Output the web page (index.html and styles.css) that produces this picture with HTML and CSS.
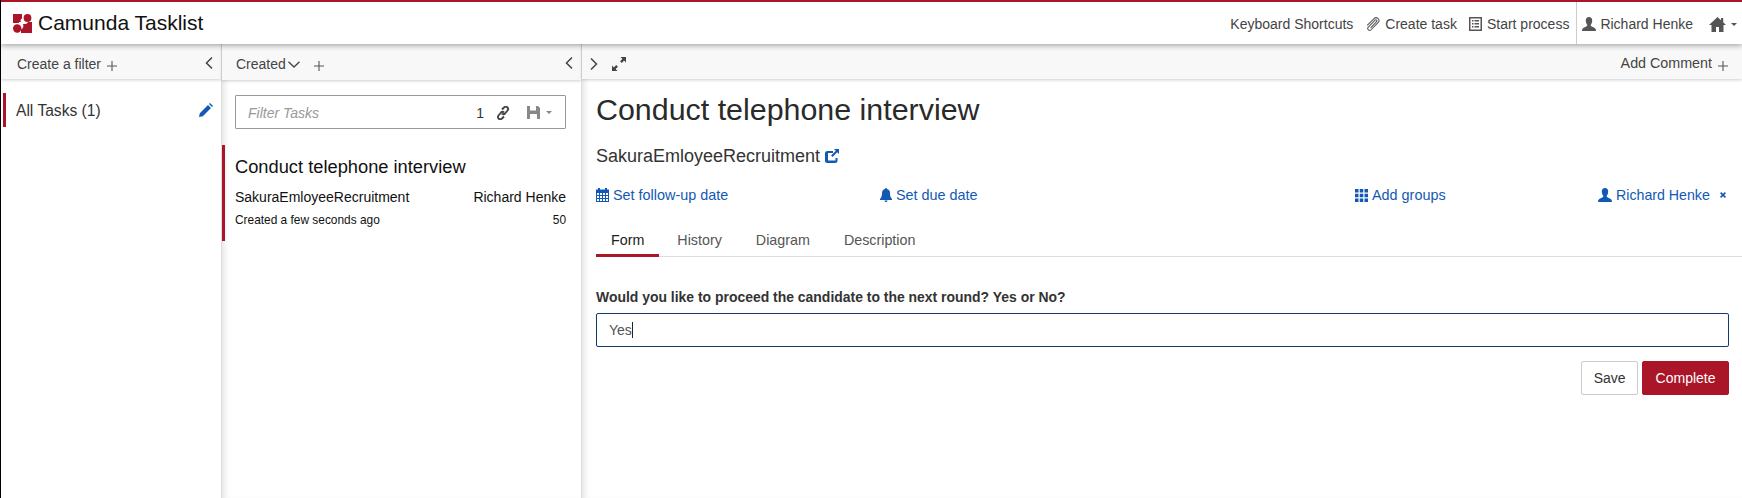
FILE: index.html
```html
<!DOCTYPE html>
<html lang="en">
<head>
  <meta charset="UTF-8" />
  <title>Camunda Tasklist</title>
  <link rel="stylesheet" href="styles.css">
</head>
<body>
  <header class="navbar">
    <div class="brand">
      <svg class="logo" viewBox="0 0 19 19" width="19" height="19">
        <path fill="#ab1528" d="M0 0h9v4.500a2.500 2.500 0 0 0-1 3.500H7a2 2 0 0 0-1.500 1H0zM10 10h2a3 3 0 0 0 3-2h4v11H8v-3.500a4.500 4.500 0 0 0 2-5.500z"/>
        <circle fill="#ab1528" cx="14.500" cy="4" r="3.900"/>
        <circle fill="#ab1528" cx="4.200" cy="14.500" r="4.200"/>
      </svg>
      <span class="brand-name">Camunda Tasklist</span>
    </div>
    <nav class="nav-links">
      <a class="nav-link">Keyboard Shortcuts</a>
      <a class="nav-link">
        <svg class="icon" viewBox="0 0 16 16" width="16" height="15"><path fill="none" stroke="#555" stroke-width="1.100" d="M5.500 11.500 11.800 5a1.100 1.100 0 0 0-1.600-1.600L3 10.800a2 2 0 0 0 2.900 2.800l7.500-7.600a3 3 0 0 0-4.300-4.300L1.800 9"/></svg>
        Create task
      </a>
      <a class="nav-link nav-link-last">
        <svg class="icon" viewBox="0 0 14 14" width="14" height="14"><path fill="#555" fill-rule="evenodd" d="M0 0h13v14H0zM1.500 1.500v11h10v-11zM3 3h1.500v1.500H3zM5.500 3H10v1.500H5.500zM3 6h1.500v1.500H3zM5.500 6H10v1.500H5.500zM3 9h1.500v1.500H3zM5.500 9H10v1.500H5.500z"/></svg>
        Start process
      </a>
      <a class="nav-link nav-user">
        <svg class="icon" viewBox="0 0 14 14" width="14" height="14"><path fill="#555" d="M7 0c2 0 3.200 1.500 3.200 3.500S9.300 7 8.700 8c0 1 .5 1.300 2 2 1.800.7 3.300 1.200 3.300 4H0c0-2.800 1.500-3.300 3.300-4 1.500-.7 2-1 2-2-.6-1-1.500-2.500-1.500-4.500S5 0 7 0z"/></svg>
        Richard Henke
      </a>
      <a class="nav-link nav-home">
        <svg class="icon" viewBox="0 0 17 15" width="17" height="15"><path fill="#555" d="M8.500 0 12 3.200V1h2.200v4.200L17 8h-2.500v7H10v-5H7v5H2.500V8H0z"/></svg>
        <span class="caret"></span>
      </a>
    </nav>
  </header>

  <main class="columns">
    <aside class="col col-filters">
      <div class="col-bar">
        <span class="bar-text">Create a filter</span>
        <svg class="plus" viewBox="0 0 10 10" width="10" height="10"><path stroke="#555" stroke-width="1.100" d="M5 0v10M0 5h10"/></svg>
        <svg class="chevron chevron-end" viewBox="0 0 8 12" width="8" height="12"><path fill="none" stroke="#444" stroke-width="1.500" d="M7 .5 1.500 6 7 11.500"/></svg>
      </div>
      <div class="filter-row">
        <span>All Tasks (1)</span>
        <svg class="pencil" viewBox="0 0 14 14" width="14" height="14"><path fill="#1259b5" d="M0 14l.8-3.800L9 2l3 3-8.200 8.200zM10 1l1-1 3 3-1 1z"/></svg>
      </div>
    </aside>

    <section class="col col-list">
      <div class="col-bar col-bar-tall">
        <span class="bar-text">Created</span>
        <svg class="sort-chevron" viewBox="0 0 12 7" width="12" height="7"><path fill="none" stroke="#444" stroke-width="1.300" d="M.5.700 6 6l5.500-5.300"/></svg>
        <svg class="plus plus-list" viewBox="0 0 10 10" width="10" height="10"><path stroke="#555" stroke-width="1.100" d="M5 0v10M0 5h10"/></svg>
        <svg class="chevron chevron-end" viewBox="0 0 8 12" width="8" height="12"><path fill="none" stroke="#444" stroke-width="1.500" d="M7 .5 1.500 6 7 11.500"/></svg>
      </div>
      <div class="search-box">
        <span class="search-placeholder">Filter Tasks</span>
        <span class="search-count">1</span>
        <svg class="search-link" viewBox="0 0 14 14" width="14" height="14"><path fill="none" stroke="#444" stroke-width="1.900" d="M6 3.500 8 1.500a2.300 2.300 0 0 1 3.500 3L9 7.500a2 2 0 0 1-3 0M8 10.500 6 12.500a2.300 2.300 0 0 1-3.500-3L5 6.500a2 2 0 0 1 3 0"/></svg>
        <svg class="search-save" viewBox="0 0 13 13" width="13" height="13"><path fill="#888" fill-rule="evenodd" d="M0 0h11l2 2v11H0zM3 0v4.500h6V0zM3 8v5h7V8z"/></svg>
        <span class="caret caret-light"></span>
      </div>
      <article class="task-card">
        <h3 class="task-title">Conduct telephone interview</h3>
        <div class="task-row">
          <span>SakuraEmloyeeRecruitment</span>
          <span>Richard Henke</span>
        </div>
        <div class="task-row task-row-small">
          <span>Created a few seconds ago</span>
          <span>50</span>
        </div>
      </article>
    </section>

    <section class="col col-detail">
      <div class="col-bar">
        <svg class="chevron" viewBox="0 0 8 12" width="8" height="12"><path fill="none" stroke="#444" stroke-width="1.500" d="M1 .5 6.500 6 1 11.500"/></svg>
        <svg class="expand" viewBox="0 0 14 14" width="14" height="14"><path fill="#444" d="M8.500 0H14v5.500l-1.900-1.900L9.800 5.900 8.100 4.200l2.300-2.300zM5.500 14H0V8.500l1.900 1.900 2.300-2.300 1.700 1.700-2.300 2.300z"/></svg>
        <span class="bar-text bar-comment">Add Comment</span>
        <svg class="plus" viewBox="0 0 10 10" width="10" height="10"><path stroke="#555" stroke-width="1.100" d="M5 0v10M0 5h10"/></svg>
      </div>
      <div class="detail">
        <h2 class="detail-title">Conduct telephone interview</h2>
        <div class="detail-process">
          SakuraEmloyeeRecruitment
          <svg viewBox="0 0 14 14" width="14" height="14"><path fill="#1259b5" fill-rule="evenodd" d="M2.500 2H8v2H3v7.500h7.500V9h2v2.500a2.500 2.500 0 0 1-2.500 2.500H2.500A2.500 2.500 0 0 1 0 11.500v-7A2.500 2.500 0 0 1 2.500 2zM9 0h5v5l-1.800-1.800-4.700 4.700-1.400-1.400 4.700-4.700z"/></svg>
        </div>
        <div class="detail-meta">
          <a class="meta-link">
            <svg viewBox="0 0 13 14" width="13" height="14"><path fill="#1259b5" fill-rule="evenodd" d="M2 0h2v1.500h5V0h2v1.500h2V14H0V1.500h2zM1 5v2h2V5zM4 5v2h2V5zM7 5v2h2V5zM10 5v2h2V5zM1 8v2h2V8zM4 8v2h2V8zM7 8v2h2V8zM10 8v2h2V8zM1 11v2h2v-2zM4 11v2h2v-2zM7 11v2h2v-2zM10 11v2h2v-2z"/></svg>
            Set follow-up date
          </a>
          <a class="meta-link">
            <svg viewBox="0 0 12 14" width="12" height="14"><path fill="#1259b5" d="M6 0a1 1 0 0 1 1 1c2 .5 3 2 3 4 0 3 .5 4.500 2 6v1H0v-1c1.500-1.500 2-3 2-6 0-2 1-3.500 3-4a1 1 0 0 1 1-1zM4.500 12.500h3A1.500 1.500 0 0 1 4.500 12.500z"/></svg>
            Set due date
          </a>
          <a class="meta-link">
            <svg viewBox="0 0 13 13" width="13" height="13"><path fill="#1259b5" d="M0 0h3.500v3.500H0zM4.750 0h3.500v3.500h-3.500zM9.500 0H13v3.500H9.500zM0 4.750h3.500v3.500H0zM4.750 4.750h3.500v3.500h-3.500zM9.500 4.750H13v3.500H9.500zM0 9.500h3.500V13H0zM4.750 9.500h3.500V13h-3.500zM9.500 9.500H13V13H9.500z"/></svg>
            Add groups
          </a>
          <a class="meta-link meta-user">
            <svg viewBox="0 0 14 14" width="14" height="14"><path fill="#1259b5" d="M7 0c2 0 3.200 1.500 3.200 3.500S9.300 7 8.700 8c0 1 .5 1.300 2 2 1.800.7 3.300 1.200 3.300 4H0c0-2.800 1.500-3.300 3.300-4 1.500-.7 2-1 2-2-.6-1-1.500-2.500-1.500-4.500S5 0 7 0z"/></svg>
            Richard Henke
            <svg class="meta-remove" viewBox="0 0 6 6" width="6" height="6"><path stroke="#1259b5" stroke-width="1.600" d="M.6.600l4.800 4.800M5.400.600.600 5.400"/></svg>
          </a>
        </div>
        <ul class="tabs">
          <li class="tab tab-active">Form</li>
          <li class="tab">History</li>
          <li class="tab">Diagram</li>
          <li class="tab">Description</li>
        </ul>
        <form class="task-form">
          <label class="form-label">Would you like to proceed the candidate to the next round? Yes or No?</label>
          <div class="form-input"><span>Yes</span><i class="text-cursor"></i></div>
          <div class="form-actions">
            <button type="button" class="btn">Save</button>
            <button type="button" class="btn btn-primary">Complete</button>
          </div>
        </form>
      </div>
    </section>
  </main>
</body>
</html>
```

FILE: styles.css
```css
* {
  margin: 0;
  padding: 0;
  box-sizing: border-box;
}

html, body {
  height: 100%;
  overflow: hidden;
}

body {
  font-family: "Liberation Sans", Arial, sans-serif;
  font-size: 14px;
  color: #333;
  background: #fff;
  border-left: 1px solid #000;
  display: flex;
  flex-direction: column;
}

svg {
  display: block;
  flex: none;
}

.navbar {
  height: 44px;
  flex: none;
  border-top: 2px solid #ab1528;
  background: #fff;
  display: flex;
  align-items: stretch;
  justify-content: space-between;
  position: relative;
  z-index: 10;
  box-shadow: 0 1px 6px rgba(0, 0, 0, 0.4);
}

.brand {
  display: flex;
  align-items: center;
  padding-left: 12px;
  gap: 6px;
}

.brand-name {
  font-size: 21px;
  color: #111;
}

.nav-links {
  display: flex;
  align-items: stretch;
  padding-right: 5px;
}

.nav-link {
  display: flex;
  align-items: center;
  gap: 4px;
  color: #444;
  margin-left: 12px;
  padding-top: 2px;
}

.nav-link-last {
  margin-right: 7px;
}

.nav-user {
  margin-left: 0;
  padding-left: 5px;
  border-left: 1px solid #ccc;
}

.nav-home {
  margin-left: 16px;
  gap: 5px;
}

.caret {
  width: 0;
  height: 0;
  border-left: 3.500px solid transparent;
  border-right: 3.500px solid transparent;
  border-top: 3.500px solid #555;
}

.caret-light {
  border-top-color: #888;
  margin-left: 6px;
}

.columns {
  flex: 1;
  display: flex;
  min-height: 0;
}

.col {
  display: flex;
  flex-direction: column;
  min-height: 0;
  position: relative;
}

.col-filters {
  width: 220px;
  flex: none;
}

.col-list {
  width: 360px;
  flex: none;
  border-left: 1px solid #ddd;
  box-shadow: inset 6px 0 6px -4px rgba(0, 0, 0, 0.12);
}

.col-detail {
  flex: 1;
  min-width: 0;
  border-left: 1px solid #ddd;
  box-shadow: inset 6px 0 6px -4px rgba(0, 0, 0, 0.12);
}

.col-bar {
  height: 35px;
  flex: none;
  background: #f8f8f8;
  display: flex;
  align-items: center;
  padding: 4px 8px 0 16px;
  color: #444;
  box-shadow: 0 1px 3px rgba(0, 0, 0, 0.2);
}

.col-bar-tall {
  height: 36px;
  padding-left: 14px;
  padding-right: 8px;
}

.col-detail .col-bar {
  padding: 4px 14px 0 8px;
}

.bar-text {
  line-height: 27px;
  color: #444;
}

.col-filters .bar-text {
  margin-top: 2px;
}

.plus {
  margin-left: 6px;
  margin-top: 4px;
}

.plus-list {
  margin-left: 14px;
}

.sort-chevron {
  margin-left: 2px;
}

.chevron-end {
  margin-left: auto;
  margin-top: -2px;
}

.expand {
  margin-left: 14px;
}

.bar-comment {
  margin-left: auto;
  font-size: 14.300px;
}

.filter-row {
  margin: 14px 8px 0 2px;
  height: 34px;
  border-left: 3px solid #ab1528;
  padding-left: 10px;
  display: flex;
  align-items: center;
  justify-content: space-between;
  font-size: 15.600px;
  color: #333;
}

.filter-row span {
  padding-top: 2px;
}

.search-box {
  margin: 15px 15px 0 13px;
  height: 34px;
  flex: none;
  border: 1px solid #999;
  display: flex;
  align-items: center;
  padding: 1px 13px 0 12px;
  border-radius: 1px;
  color: #333;
}

.search-placeholder {
  font-style: italic;
  color: #999;
  margin-right: auto;
}

.search-link {
  margin-left: 12px;
}

.search-save {
  margin-left: 17px;
}

.task-card {
  margin-top: 16px;
  height: 96px;
  border-left: 3px solid #ab1528;
  padding: 11px 15px 0 10px;
  color: #111;
}

.task-title {
  font-size: 18.300px;
  font-weight: normal;
  line-height: 22px;
}

.task-row {
  display: flex;
  justify-content: space-between;
  margin-top: 11px;
  line-height: 16px;
}

.task-row-small {
  font-size: 11.900px;
  margin-top: 7px;
}

.detail {
  padding: 0 13px 0 14px;
}

.detail-title {
  font-size: 30.400px;
  font-weight: normal;
  line-height: 36px;
  margin-top: 12px;
  color: #2a2a2a;
}

.detail-process {
  display: flex;
  align-items: center;
  gap: 5px;
  font-size: 18px;
  line-height: 22px;
  margin-top: 18px;
}

.detail-meta {
  display: grid;
  grid-template-columns: 284px 475px 243px 1fr;
  margin-top: 19px;
  line-height: 18px;
  font-size: 14.400px;
}

.meta-link {
  display: flex;
  align-items: center;
  gap: 4px;
  color: #1259b5;
  white-space: nowrap;
}

.meta-user {
  font-size: 14.200px;
}

.meta-remove {
  margin-left: 6px;
}

.tabs {
  list-style: none;
  display: flex;
  margin: 15px -13px 0 0;
  border-bottom: 1px solid #ddd;
  height: 38px;
  font-size: 14.300px;
}

.tab {
  padding: 0 15px;
  height: 38px;
  line-height: 43px;
  margin-right: 4px;
  color: #555;
}

.tab-active {
  color: #222;
  border-bottom: 3px solid #ab1528;
  line-height: 43px;
  margin-right: 3px;
}

.task-form {
  padding-top: 30px;
}

.form-label {
  display: block;
  font-weight: bold;
  font-size: 13.950px;
  line-height: 20px;
  color: #333;
}

.form-input {
  margin-top: 6px;
  height: 34px;
  border: 1px solid #143a6e;
  border-radius: 2px;
  display: flex;
  align-items: center;
  padding-left: 12px;
  color: #555;
}

.text-cursor {
  display: block;
  width: 1px;
  height: 16px;
  background: #222;
}

.form-actions {
  display: flex;
  justify-content: flex-end;
  gap: 4px;
  margin-top: 14px;
}

.btn {
  height: 34px;
  padding: 0 11.500px;
  font: inherit;
  color: #333;
  background: #fff;
  border: 1px solid #ccc;
  border-radius: 2px;
}

.btn-primary {
  padding: 0 12.500px;
  background: #ab1528;
  border-color: #ab1528;
  color: #fff;
}
```
